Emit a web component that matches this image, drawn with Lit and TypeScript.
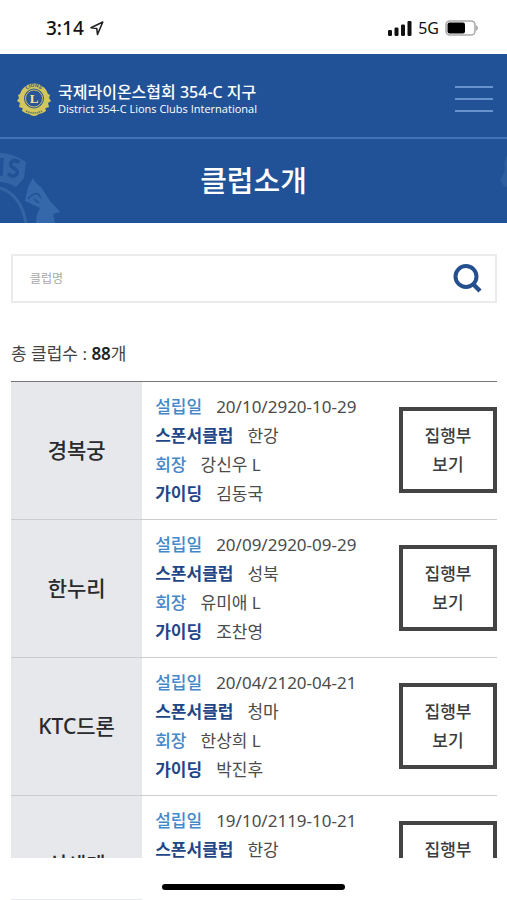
import { LitElement, html, css } from "lit";
import { customElement, state } from "lit/decorators.js";

interface Club {
  name: string;
  founded: string;
  sponsor: string;
  president: string;
  guiding: string;
}

const CLUBS: Club[] = [
  { name: "경복궁", founded: "20/10/2920-10-29", sponsor: "한강", president: "강신우 L", guiding: "김동국" },
  { name: "한누리", founded: "20/09/2920-09-29", sponsor: "성북", president: "유미애 L", guiding: "조찬영" },
  { name: "KTC드론", founded: "20/04/2120-04-21", sponsor: "청마", president: "한상희 L", guiding: "박진후" },
  { name: "신세계", founded: "19/10/2119-10-21", sponsor: "한강", president: "", guiding: "" },
];

@customElement("status-bar")
export class StatusBar extends LitElement {
  static styles = css`
    :host { display: flex; justify-content: space-between; align-items: center; height: 54px; box-sizing: border-box; padding: 2px 28px 0 46px; color: #111; }
    .side { display: flex; align-items: center; gap: 6px; }
    .time { font: 500 19px/24px "Noto Sans", sans-serif; }
    .net { font: 400 16px/24px "Noto Sans", sans-serif; }
    svg { display: block; }
  `;
  render() {
    return html`
      <div class="side">
        <span class="time">3:14</span>
        <svg width="14" height="15" viewBox="0 0 14 15"><path d="M1 6.800 12.800 1 7.500 13.500 6.800 7.500Z" fill="none" stroke="#222" stroke-width="1.600" stroke-linejoin="round"/></svg>
      </div>
      <div class="side">
        <svg width="24" height="15" viewBox="0 0 24 15" fill="#111">
          <rect x="0" y="9" width="4" height="6" rx="1.300"/><rect x="6.500" y="6.500" width="4" height="8.500" rx="1.300"/>
          <rect x="13" y="3.500" width="4" height="11.500" rx="1.300"/><rect x="19.500" y="0" width="4" height="15" rx="1.300"/>
        </svg>
        <span class="net">5G</span>
        <svg width="34" height="16" viewBox="0 0 34 16">
          <rect x="1" y="1" width="29" height="14" rx="4" fill="#fff" stroke="#aaa" stroke-width="1.600"/>
          <rect x="2.500" y="2.500" width="17.500" height="11" rx="2" fill="#000"/>
          <path d="M31 5q4 3 0 6z" fill="#aaa"/>
        </svg>
      </div>
    `;
  }
}

@customElement("site-header")
export class SiteHeader extends LitElement {
  static styles = css`
    :host { display: block; background: #215297; color: #fff; }
    .bar { display: flex; align-items: center; justify-content: space-between; height: 85px; padding: 7px 14px 0 16px; border-bottom: 2px solid #4272b3; box-sizing: border-box; }
    .brand { display: flex; align-items: center; gap: 6px; color: inherit; text-decoration: none; }
    .names { display: flex; flex-direction: column; }
    .ko { font-size: 16px; line-height: 20px; font-weight: 500; }
    .en { font-family: "Open Sans", sans-serif; font-size: 11px; line-height: 14px; font-weight: 400; }
    svg { display: block; }
    .menu { display: flex; flex-direction: column; gap: 10px; width: 38px; padding: 0; background: none; border: 0; }
    .menu i { height: 2px; background: #6692ce; }
    .hero { position: relative; overflow: hidden; display: flex; align-items: center; justify-content: center; height: 84px; }
    h1 { margin: 0; font-size: 29px; line-height: 40px; font-weight: 500; }
    .mark { position: absolute; left: 0; bottom: 0; }
    .mark.right { left: auto; right: 0; }
  `;
  render() {
    return html`
      <header class="bar">
        <a class="brand" href="#">
          <svg width="36" height="36" viewBox="0 0 36 36" aria-hidden="true">
            <g fill="#d3c65d">
              <circle cx="18" cy="17" r="14.500"/>
              <path d="M6 12 2 14l1 3-2 3 3 2-1 4 6 2zM30 12l4 2-1 3 2 3-3 2 1 4-6 2z"/>
              <path d="M7 26q11 7 22 0l1 4q-4 3-7 3-5 4-10 0-3 0-7-3z"/>
            </g>
            <circle cx="18" cy="17.500" r="9.500" fill="#2a5598" stroke="#315c8e" stroke-width="1"/>
            <circle cx="18" cy="17.500" r="8.500" fill="none" stroke="#c9c067" stroke-width="1"/>
            <path id="arc" d="M7.600 13A11.200 11.200 0 0 1 28.400 13" fill="none"/>
            <text font-family="Liberation Sans" font-size="5" font-weight="700" fill="#2a5080" text-anchor="middle"><textPath href="#arc" startOffset="50%">LIONS</textPath></text>
            <text x="18" y="22" font-family="Liberation Serif" font-size="13" font-weight="700" fill="#f0e896" text-anchor="middle">L</text>
            <path d="M10 30q8 4 16 0" fill="none" stroke="#5d7a62" stroke-width="1.500" stroke-dasharray="1.500 .7"/>
          </svg>
          <span class="names">
            <span class="ko">국제라이온스협회 354-C 지구</span>
            <span class="en">District 354-C Lions Clubs International</span>
          </span>
        </a>
        <button class="menu" aria-label="메뉴"><i></i><i></i><i></i></button>
      </header>
      <div class="hero">
        <svg class="mark" width="62" height="72" viewBox="0 0 62 72" aria-hidden="true">
          <path d="M0 2Q12 2 26 11L24 27 16 36Q8 31 0 31Z" fill="#3365a6"/>
          <path d="M0 37Q21 44 26 72" fill="none" stroke="#3365a6" stroke-width="3"/>
          <path d="M33 27q3 6 8 9l9 14 10 11-7 2 2 9H36l1-9 3-6-15-7 3-14z" fill="#3568ab"/>
          <path d="M28 48q5-6 10-5l3 4M34 48l5 4" fill="none" stroke="#24569b" stroke-width="2"/>
          <path d="M19.500 11.500Q14 7.500 11 11.500 9.500 15.500 14.500 17.500 19 20 16.500 23.500 12.500 27 8 22.500" fill="none" stroke="#215297" stroke-width="3.600"/>
          <path d="M2 7 1 25" stroke="#215297" stroke-width="3.500"/>
        </svg>
        <h1>클럽소개</h1>
        <svg class="mark right" width="8" height="72" viewBox="0 0 8 72" aria-hidden="true"><path d="M8 4 5 12l1 7-5 11 3 4 4 3z" fill="#2d5e9f"/></svg>
      </div>
    `;
  }
}

@customElement("club-table")
export class ClubTable extends LitElement {
  static properties = { clubs: { attribute: false } };
  declare clubs: Club[];
  static styles = css`
    :host { display: block; }
    table { width: 100%; border-collapse: separate; border-spacing: 0; border-top: 1px solid #777; table-layout: fixed; }
    .c-name { width: 27%; }
    .c-act { width: 98px; }
    th, td { padding: 0; border-bottom: 1px solid #ccc; vertical-align: middle; }
    th, .act { padding-bottom: 2px; }
    th { background: #e6e8ec; color: #292a2d; font-size: 21px; line-height: 30px; font-weight: 500; }
    dl { margin: 0; padding: 10px 0 11px 13px; }
    .line { display: flex; gap: 14px; line-height: 29px; font-size: 17px; white-space: nowrap; }
    dt { color: #4488ca; font-weight: 500; }
    .line:nth-child(even) dt { color: #1f4788; font-weight: 700; }
    dd { margin: 0; color: #4b4b4b; }
    button { display: block; width: 100%; height: 86px; padding: 0; background: #fff; border: 4px solid #444; color: #3c3c3c; font: inherit; font-size: 17px; line-height: 29px; font-weight: 500; }
  `;
  render() {
    return html`
      <table>
        <colgroup><col class="c-name"><col><col class="c-act"></colgroup>
        <tbody>
          ${this.clubs.map((c) => html`
            <tr>
              <th scope="row">${c.name}</th>
              <td>
                <dl>
                  <div class="line"><dt>설립일</dt><dd>${c.founded}</dd></div>
                  <div class="line"><dt>스폰서클럽</dt><dd>${c.sponsor}</dd></div>
                  <div class="line"><dt>회장</dt><dd>${c.president}</dd></div>
                  <div class="line"><dt>가이딩</dt><dd>${c.guiding}</dd></div>
                </dl>
              </td>
              <td class="act"><button>집행부<br>보기</button></td>
            </tr>`)}
        </tbody>
      </table>
    `;
  }
}

@customElement("app-root")
export class AppRoot extends LitElement {
  @state() private clubs = CLUBS;
  static styles = css`
    :host { display: flex; flex-direction: column; height: 100vh; overflow: hidden; background: #fff; font-family: "Noto Sans", "Noto Sans CJK KR", sans-serif; }
    .view { flex: 1; min-height: 0; overflow: hidden; }
    main { padding: 31px 10px 0 11px; }
    form { display: flex; align-items: center; border: 2px solid #ebebeb; height: 49px; box-sizing: border-box; padding-right: 12px; }
    input { flex: 1; min-width: 0; height: 30px; border: 0; outline: 0; padding: 0 17px; background: none; font: inherit; font-size: 12px; color: #333; }
    input::placeholder { color: #a8a8a8; opacity: 1; }
    .find { padding: 0; border: 0; background: none; }
    svg { display: block; }
    .total { margin: 37px 0 13px; font-size: 17px; line-height: 28px; color: #444; }
    .total strong { font-weight: 600; color: #222; }
    .home { display: flex; flex-direction: column; align-items: center; justify-content: space-between; height: 42px; padding-top: 26px; box-sizing: border-box; }
    .grip { width: 36%; height: 6px; border-radius: 3px; background: #000; }
    .peek { align-self: stretch; height: 1px; margin: 0 10px 0 11px; }
    .peek i { display: block; width: 27%; height: 1px; background: #e6e8ec; }
  `;
  render() {
    return html`
      <status-bar></status-bar>
      <div class="view">
        <site-header></site-header>
        <main>
          <form role="search">
            <input type="text" placeholder="클럽명" aria-label="클럽명">
            <button class="find" type="button" aria-label="검색">
              <svg width="30" height="30" viewBox="0 0 30 30" fill="none" stroke="#25508f"><circle cx="13" cy="12.500" r="10.500" stroke-width="4"/><path d="M20.500 20.500 27 27" stroke-width="4.400"/></svg>
            </button>
          </form>
          <p class="total">총 클럽수 : <strong>88</strong>개</p>
          <club-table .clubs=${this.clubs}></club-table>
        </main>
      </div>
      <div class="home"><div class="grip"></div><div class="peek"><i></i></div></div>
    `;
  }
}
